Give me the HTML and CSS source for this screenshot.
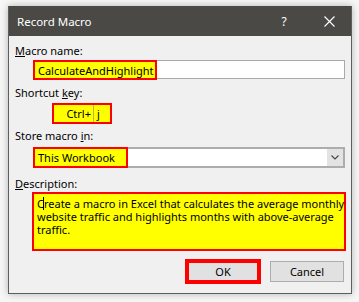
FILE: index.html
```html
<!DOCTYPE html>
<html lang="en">
<head>
<meta charset="utf-8">
<title>Record Macro</title>
<link rel="stylesheet" href="styles.css">
</head>
<body>
<div class="dialog">
  <div class="titlebar">
    <span class="title">Record Macro</span>
    <span class="help">?</span>
    <span class="close">
      <svg width="11" height="11" viewBox="0 0 11 11"><path d="M0.5 0.5 L10.5 10.5 M10.5 0.5 L0.5 10.5" stroke="#ffffff" stroke-width="1.1" fill="none"/></svg>
    </span>
  </div>
  <div class="content">
    <div class="label l-name"><u>M</u>acro name:</div>
    <div class="textbox"><span class="hl hl-name">CalculateAndHighlight</span></div>

    <div class="label l-key">Shortcut <u>k</u>ey:</div>
    <div class="keybox"><span class="ctrl">Ctrl+</span><span class="keych">j</span></div>

    <div class="label l-store">Store macro <u>i</u>n:</div>
    <div class="select">
      <span class="hl hl-store">This Workbook</span>
      <span class="drop"><svg width="8" height="5" viewBox="0 0 8 5"><path d="M0.5 0.5 L4 4 L7.5 0.5" stroke="#444" stroke-width="1.1" fill="none"/></svg></span>
    </div>

    <div class="label l-desc"><u>D</u>escription:</div>
    <div class="desc"><span class="caret"></span>Create a macro in Excel that calculates the average monthly<br>website traffic and highlights months with above-average<br>traffic.</div>

    <div class="buttons">
      <div class="btn ok">OK</div>
      <div class="btn cancel">Cancel</div>
    </div>
  </div>
</div>
</body>
</html>
```

FILE: styles.css
```css
html, body {
  margin: 0;
  padding: 0;
}
body {
  background: #f6f6f6;
  font-family: "Noto Sans", "Open Sans", sans-serif;
  font-size: 11px;
  color: #000;
  width: 359px;
  height: 302px;
  overflow: hidden;
}
.dialog {
  box-sizing: border-box;
  margin: 6px 0 0 8px;
  width: 344px;
  height: 288px;
  border: 1px solid #5e5e5e;
  border-top-color: #4b4946;
  background: #f0f0f0;
  box-shadow: 0 0 7px rgba(0, 0, 0, 0.28);
  display: flex;
  flex-direction: column;
}
.titlebar {
  height: 29px;
  background: #4b4946;
  color: #fff;
  display: flex;
  align-items: center;
  padding-left: 8px;
  font-size: 11.5px;
}
.title {
  flex: 1;
  margin-top: -1px;
}
.help {
  width: 20px;
  text-align: center;
  margin-top: -1px;
  font-size: 12px;
}
.close {
  width: 46px;
  margin-left: 12px;
  display: flex;
  justify-content: center;
  align-items: center;
  margin-right: -1px;
}
.content {
  padding: 8px 6px 0 6px;
  display: flex;
  flex-direction: column;
  align-items: flex-start;
}
.label {
  line-height: 14px;
  height: 14px;
}
.l-name { margin-bottom: 2px; }
.l-key { margin-top: 7px; margin-bottom: 3px; }
.l-store { margin-top: 5px; margin-bottom: 4px; }
.l-desc { margin-top: 9px; margin-bottom: 1px; }

.textbox {
  box-sizing: border-box;
  margin-left: 18px;
  width: 312px;
  height: 19px;
  border: 1px solid #a9a9a9;
  background: #fff;
  display: flex;
}
.hl {
  box-sizing: border-box;
  background: #ffff00;
  border: 2px solid #ff0000;
  padding-left: 3px;
  display: flex;
  align-items: center;
}
.hl-name {
  width: 124px;
  height: 20px;
  margin: -1px 0 0 -1px;
}
.keybox {
  box-sizing: border-box;
  margin-left: 37px;
  width: 60px;
  height: 21px;
  border: 2px solid #ff0000;
  background: #ffff00;
  display: flex;
  align-items: stretch;
}
.ctrl {
  width: 40px;
  text-align: right;
  padding-right: 2px;
  box-sizing: border-box;
  border-right: 1px solid #b8b84a;
  line-height: 17px;
}
.keych {
  padding-left: 3px;
  line-height: 17px;
}
.select {
  box-sizing: border-box;
  margin-left: 18px;
  width: 312px;
  height: 21px;
  border: 2px solid #adadad;
  background: #fff;
  display: flex;
}
.hl-store {
  width: 95px;
  height: 21px;
  margin: -2px 0 -2px -2px;
}
.drop {
  margin-left: auto;
  width: 16px;
  background: #e3e3e3;
  display: flex;
  align-items: center;
  justify-content: center;
}
.desc {
  box-sizing: border-box;
  margin-left: 17px;
  width: 314px;
  height: 59px;
  border: 2px solid #ff0000;
  background: #ffff00;
  padding: 3px 3px 0 3px;
  line-height: 13px;
  white-space: nowrap;
  position: relative;
}
.caret {
  position: absolute;
  left: 9px;
  top: 3px;
  width: 1px;
  height: 13px;
  background: #000;
}
.buttons {
  align-self: stretch;
  margin-top: 8px;
  display: flex;
  justify-content: flex-end;
  align-items: center;
  gap: 9px;
  padding-right: 1px;
}
.btn {
  box-sizing: border-box;
  background: #e1e1e1;
  display: flex;
  align-items: center;
  justify-content: center;
}
.ok {
  width: 76px;
  height: 25px;
  border: 4px solid #ff0000;
}
.cancel {
  width: 74px;
  height: 21px;
  border: 1px solid #adadad;
}
```
